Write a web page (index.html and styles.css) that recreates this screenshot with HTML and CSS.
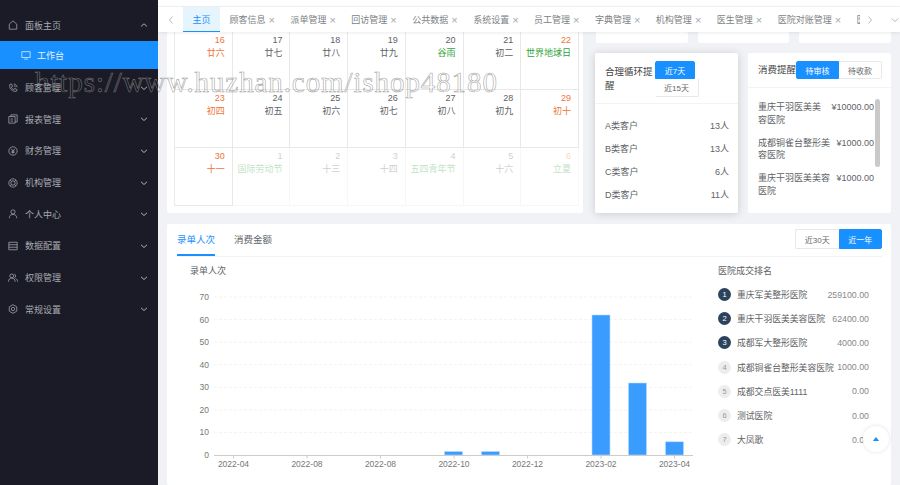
FILE: index.html
```html
<!DOCTYPE html>
<html lang="zh-CN">

<head>
    <meta charset="UTF-8">
    <meta name="viewport" content="width=device-width, initial-scale=1.0">
    <title>工作台</title>
    <link rel="stylesheet" href="styles.css">
</head>

<body>
    <!-- 左侧菜单 -->
    <aside class="side">
        <div class="menu">
            <svg class="ico" viewBox="0 0 12 12"><path d="M1.5 11V5L6 1l4.500 4v6z" /></svg>
            <span>面板主页</span>
            <svg class="arrow" viewBox="0 0 8 8"><path d="M1 5.500 4 2.800l3 2.700" /></svg>
        </div>
        <div class="menu-sub">
            <svg class="ico" viewBox="0 0 12 12"><path d="M1 2h10v7H1zM4 11h4" /></svg>
            <span>工作台</span>
        </div>
        <div class="menu">
            <svg class="ico" viewBox="0 0 12 12"><path d="M2 2l2-1 1.500 3L4 5c.5 1.500 1.500 2.500 3 3l1-1.500 3 1.500-1 2C5 10.500 1.500 7 2 2zM7 1c2 .5 3.500 2 4 4M7 3c1 .3 1.700 1 2 2" /></svg>
            <span>顾客管理</span>
            <svg class="arrow" viewBox="0 0 8 8"><path d="M1 2.800 4 5.500l3-2.700" /></svg>
        </div>
        <div class="menu">
            <svg class="ico" viewBox="0 0 12 12"><path d="M3.500 3V1H11v8.500H8.500M1 3h7.500v8H1zM3 6h3M3 8.500h3" /></svg>
            <span>报表管理</span>
            <svg class="arrow" viewBox="0 0 8 8"><path d="M1 2.800 4 5.500l3-2.700" /></svg>
        </div>
        <div class="menu">
            <svg class="ico" viewBox="0 0 12 12"><circle cx="6" cy="6" r="5" /><path d="M4 3.500l2 2.500 2-2.500M6 6v3M4.200 6.300h3.600M4.200 7.800h3.600" /></svg>
            <span>财务管理</span>
            <svg class="arrow" viewBox="0 0 8 8"><path d="M1 2.800 4 5.500l3-2.700" /></svg>
        </div>
        <div class="menu">
            <svg class="ico" viewBox="0 0 12 12"><circle cx="6" cy="6" r="5" /><circle cx="6" cy="6" r="2.600" /><path d="M2.500 2.500l1.700 1.700M9.500 2.500 7.800 4.200M2.500 9.500l1.700-1.700M9.500 9.500 7.800 7.800" /></svg>
            <span>机构管理</span>
            <svg class="arrow" viewBox="0 0 8 8"><path d="M1 2.800 4 5.500l3-2.700" /></svg>
        </div>
        <div class="menu">
            <svg class="ico" viewBox="0 0 12 12"><circle cx="6" cy="3.500" r="2.500" /><path d="M1.500 11c0-3 2-4.500 4.500-4.500s4.500 1.500 4.500 4.500" /></svg>
            <span>个人中心</span>
            <svg class="arrow" viewBox="0 0 8 8"><path d="M1 2.800 4 5.500l3-2.700" /></svg>
        </div>
        <div class="menu">
            <svg class="ico" viewBox="0 0 12 12"><path d="M1 1.500h10v9H1zM1 4.500h10M1 7.500h10" /></svg>
            <span>数据配置</span>
            <svg class="arrow" viewBox="0 0 8 8"><path d="M1 2.800 4 5.500l3-2.700" /></svg>
        </div>
        <div class="menu">
            <svg class="ico" viewBox="0 0 12 12"><circle cx="4.500" cy="3.500" r="2.300" /><path d="M.5 10.500c0-3 1.800-4.300 4-4.300s4 1.300 4 4.300M7.500 1.300a2.300 2.300 0 0 1 0 4.400M9 6.500c1.500.6 2.500 2 2.500 4" /></svg>
            <span>权限管理</span>
            <svg class="arrow" viewBox="0 0 8 8"><path d="M1 2.800 4 5.500l3-2.700" /></svg>
        </div>
        <div class="menu">
            <svg class="ico" viewBox="0 0 12 12"><path d="M6 .8l4.500 2.600v5.200L6 11.200 1.500 8.600V3.400z" /><circle cx="6" cy="6" r="2" /></svg>
            <span>常规设置</span>
            <svg class="arrow" viewBox="0 0 8 8"><path d="M1 2.800 4 5.500l3-2.700" /></svg>
        </div>
    </aside>

    <main class="main">
        <div class="top"></div>

        <!-- 标签栏 -->
        <nav class="tabs">
            <svg class="tab-btn" viewBox="0 0 8 10"><path d="M5.500 1.500 2.500 5l3 3.500" /></svg>
            <div class="tab-list">
                <div class="tab on">主页</div>
                <div class="tab">顾客信息<i>×</i></div>
                <div class="tab">派单管理<i>×</i></div>
                <div class="tab">回访管理<i>×</i></div>
                <div class="tab">公共数据<i>×</i></div>
                <div class="tab">系统设置<i>×</i></div>
                <div class="tab">员工管理<i>×</i></div>
                <div class="tab">字典管理<i>×</i></div>
                <div class="tab">机构管理<i>×</i></div>
                <div class="tab">医生管理<i>×</i></div>
                <div class="tab">医院对账管理<i>×</i></div>
                <div class="tab">医</div>
            </div>
            <svg class="tab-btn tab-next" viewBox="0 0 8 10"><path d="M2.500 1.500 5.500 5l-3 3.500" /></svg>
            <svg class="tab-down" viewBox="0 0 10 8"><path d="M1.500 2.500 5 5.500l3.500-3" /></svg>
        </nav>

        <div class="page">
            <div class="row-top">
                <!-- 日历 -->
                <section class="card cal">
                    <div class="cal-grid">
                        <div class="day off"><b>16</b><span>廿六</span></div>
                        <div class="day"><b>17</b><span>廿七</span></div>
                        <div class="day"><b>18</b><span>廿八</span></div>
                        <div class="day"><b>19</b><span>廿九</span></div>
                        <div class="day"><b>20</b><span class="term">谷雨</span></div>
                        <div class="day"><b>21</b><span>初二</span></div>
                        <div class="day off"><b>22</b><span class="term">世界地球日</span></div>

                        <div class="day off"><b>23</b><span>初四</span></div>
                        <div class="day"><b>24</b><span>初五</span></div>
                        <div class="day"><b>25</b><span>初六</span></div>
                        <div class="day"><b>26</b><span>初七</span></div>
                        <div class="day"><b>27</b><span>初八</span></div>
                        <div class="day"><b>28</b><span>初九</span></div>
                        <div class="day off"><b>29</b><span>初十</span></div>

                        <div class="day off"><b>30</b><span>十一</span></div>
                        <div class="day next"><b>1</b><span class="term">国际劳动节</span></div>
                        <div class="day next"><b>2</b><span>十三</span></div>
                        <div class="day next"><b>3</b><span>十四</span></div>
                        <div class="day next"><b>4</b><span class="term">五四青年节</span></div>
                        <div class="day next"><b>5</b><span>十六</span></div>
                        <div class="day next off"><b>6</b><span class="term">立夏</span></div>
                    </div>
                </section>

                <div class="right-col">
                    <div class="stubs">
                        <div class="card"></div>
                        <div class="card"></div>
                        <div class="card"></div>
                    </div>
                    <div class="remind-row">
                        <!-- 合理循环提醒 -->
                        <section class="card remind raised">
                            <div class="remind-head">
                                <div class="remind-title">合理循环提醒</div>
                                <div class="stack">
                                    <div class="btn on b7">近7天</div>
                                    <div class="btn b15">近15天</div>
                                </div>
                            </div>
                            <ul class="kinds">
                                <li><span>A类客户</span><span>13人</span></li>
                                <li><span>B类客户</span><span>13人</span></li>
                                <li><span>C类客户</span><span>6人</span></li>
                                <li><span>D类客户</span><span>11人</span></li>
                            </ul>
                        </section>

                        <!-- 消费提醒 -->
                        <section class="card remind">
                            <div class="pay-head">
                                <div class="pay-title">消费提醒</div>
                                <div class="btn on bw">待审核</div>
                                <div class="btn bw">待收款</div>
                            </div>
                            <div class="pay-body">
                                <ul class="pays">
                                    <li><span>重庆干羽医美美容医院</span><em>¥10000.00</em></li>
                                    <li><span>成都铜雀台整形美容医院</span><em>¥1000.00</em></li>
                                    <li><span>重庆干羽医美美容医院</span><em>¥1000.00</em></li>
                                </ul>
                                <div class="bar"></div>
                            </div>
                        </section>
                    </div>
                </div>
            </div>

            <!-- 下方统计 -->
            <section class="card stat">
                <div class="stat-head">
                    <div class="stat-tab on">录单人次</div>
                    <div class="stat-tab">消费金额</div>
                    <div class="range">
                        <div class="btn rw">近30天</div>
                        <div class="btn on rw">近一年</div>
                    </div>
                </div>
                <div class="stat-body">
                    <div class="chart">
                        <div class="chart-title">录单人次</div>
                        <svg class="plot" viewBox="167 285 540 200">
                            <g class="grid">
                                <path d="M214 297H693M214 319.600H693M214 342.200H693M214 364.700H693M214 387.300H693M214 409.900H693M214 432.400H693" />
                            </g>
                            <g class="bars">
                                <rect x="444.500" y="451.500" width="18" height="3.500" />
                                <rect x="481.500" y="451.500" width="18" height="3.500" />
                                <rect x="592" y="315" width="18" height="140" />
                                <rect x="628.500" y="383" width="18" height="72" />
                                <rect x="665.500" y="441.800" width="18" height="13.200" />
                            </g>
                            <path class="axis" d="M214 455.500H693M233.500 455.500v3M307 455.500v3M380.500 455.500v3M454 455.500v3M527.500 455.500v3M601 455.500v3M674.500 455.500v3" />
                            <g class="ylabel">
                                <text x="209" y="300">70</text>
                                <text x="209" y="322.600">60</text>
                                <text x="209" y="345.200">50</text>
                                <text x="209" y="367.700">40</text>
                                <text x="209" y="390.300">30</text>
                                <text x="209" y="412.900">20</text>
                                <text x="209" y="435.400">10</text>
                                <text x="209" y="458">0</text>
                            </g>
                            <g class="xlabel">
                                <text x="233.500" y="467">2022-04</text>
                                <text x="307" y="467">2022-08</text>
                                <text x="380.500" y="467">2022-08</text>
                                <text x="454" y="467">2022-10</text>
                                <text x="527.500" y="467">2022-12</text>
                                <text x="601" y="467">2023-02</text>
                                <text x="674.500" y="467">2023-04</text>
                            </g>
                        </svg>
                    </div>
                    <div class="rank">
                        <div class="rank-title">医院成交排名</div>
                        <ul class="rank-list">
                            <li class="top3"><b>1</b><span>重庆军美整形医院</span><em>259100.00</em></li>
                            <li class="top3"><b>2</b><span>重庆干羽医美美容医院</span><em>62400.00</em></li>
                            <li class="top3"><b>3</b><span>成都军大整形医院</span><em>4000.00</em></li>
                            <li><b>4</b><span>成都铜雀台整形美容医院</span><em>1000.00</em></li>
                            <li><b>5</b><span>成都交点医美1111</span><em>0.00</em></li>
                            <li><b>6</b><span>测试医院</span><em>0.00</em></li>
                            <li><b>7</b><span>大凤歌</span><em>0.00</em></li>
                        </ul>
                    </div>
                </div>
            </section>
        </div>
    </main>

    <!-- 回到顶部 -->
    <div class="totop"><svg viewBox="0 0 10 6"><path d="M5 0l4 5H1z" /></svg></div>

    <!-- 水印 -->
    <div class="mark">https://www.huzhan.com/ishop48180</div>
</body>

</html>
```

FILE: styles.css
```css
* {
    margin: 0;
    padding: 0;
    box-sizing: border-box;
}

body {
    width: 900px;
    height: 485px;
    display: flex;
    overflow: hidden;
    background-color: #f0f2f6;
    font-family: "Liberation Sans", "Noto Sans CJK SC", sans-serif;
    font-size: 9px;
    color: #606266;
}

ul {
    list-style: none;
}

em,
i {
    font-style: normal;
}

/* 左侧菜单 */

.side {
    flex: none;
    width: 158px;
    padding-top: 9.500px;
    background-color: #1a1b26;
    color: #a9abb2;
}

.menu {
    height: 31.700px;
    display: flex;
    align-items: center;
    padding: 0 9px 0 8px;
}

.menu span {
    flex: 1;
    margin-left: 7px;
}

.ico {
    flex: none;
    width: 10px;
    height: 10px;
    fill: none;
    stroke: currentColor;
    stroke-width: .9;
}

.arrow {
    flex: none;
    width: 8px;
    height: 8px;
    margin-right: 1px;
    fill: none;
    stroke: currentColor;
    stroke-width: 1;
}

.menu-sub {
    height: 28px;
    margin-bottom: 2.500px;
    display: flex;
    align-items: center;
    padding-left: 21px;
    background-color: #1890ff;
    color: #e8f4ff;
}

.menu-sub span {
    margin-left: 6px;
}

/* 主体 */

.main {
    flex: 1;
    min-width: 0;
    display: flex;
    flex-direction: column;
}

.top {
    flex: none;
    height: 7px;
    background-color: #fff;
    border-bottom: 1px solid #f1f1f3;
}

.tabs {
    position: relative;
    z-index: 1;
    flex: none;
    height: 25px;
    display: flex;
    align-items: center;
    background-color: #fff;
    box-shadow: 0 1px 3px rgba(0, 0, 0, .08);
}

.tab-btn {
    flex: none;
    width: 8px;
    height: 10px;
    margin: 0 8.500px;
    fill: none;
    stroke: #aaa;
    stroke-width: .8;
}

.tab-next {
    margin: 0 8px 0 6px;
}

.tab-list {
    flex: none;
    width: 677px;
    height: 100%;
    display: flex;
    overflow: hidden;
}

.tab {
    flex: none;
    height: 100%;
    display: flex;
    align-items: center;
    padding: 0 6.400px 0 9.500px;
    color: #7d7f84;
    white-space: nowrap;
}

.tab i {
    width: 6px;
    margin-left: 3px;
    text-align: center;
    font-size: 11px;
    color: #a8a8a8;
}

.tab.on {
    padding: 0 9.500px;
    background-color: #e6f4fd;
    border-bottom: 1px solid #1890ff;
    color: #1890ff;
}

.tab-down {
    flex: none;
    width: 10px;
    height: 8px;
    margin-left: 8px;
    fill: none;
    stroke: #aaa;
    stroke-width: .8;
}

.page {
    flex: 1;
    min-height: 0;
    padding: 0 9px;
}

.card {
    background-color: #fff;
    border-radius: 2px;
}

.row-top {
    display: flex;
    gap: 13px;
    height: 181px;
}

/* 日历 */

.cal {
    flex: none;
    width: 416px;
    padding: 0 4px 7px 7px;
}

.cal-grid {
    height: 174px;
    display: grid;
    grid-template-columns: repeat(7, 1fr);
    grid-template-rows: repeat(3, 58px);
    border-left: 1px solid #eaeaea;
}

.day {
    display: flex;
    flex-direction: column;
    align-items: flex-end;
    padding: 2px 7px 0 0;
    border-right: 1px solid #e8e8e8;
    border-bottom: 1px solid #e8e8e8;
    line-height: 13px;
    color: #606266;
}

.day b {
    font-weight: normal;
}

.day.off {
    color: #f0733a;
}

.day .term {
    color: #31a33a;
}

.day.next {
    opacity: .3;
}

/* 右侧提醒 */

.right-col {
    flex: 1;
    display: flex;
    flex-direction: column;
    gap: 10px;
}

.stubs {
    flex: none;
    height: 11px;
    display: flex;
    gap: 10px;
}

.stubs .card {
    flex: 1;
}

.remind-row {
    flex: 1;
    display: flex;
    gap: 10px;
    margin-left: -1px;
}

.remind {
    flex: 1;
    display: flex;
    flex-direction: column;
}

.raised {
    box-shadow: 0 1px 8px rgba(0, 0, 0, .16);
}

.btn {
    display: flex;
    align-items: center;
    justify-content: center;
    height: 18px;
    border: 1px solid #e6e8ec;
    font-size: 8px;
    color: #666;
    background-color: #fff;
}

.btn.on {
    border-color: #1890ff;
    background-color: #1890ff;
    color: #fff;
}

.remind-head {
    height: 51px;
    flex: none;
    display: flex;
    padding: 8px 0 0 10px;
    border-bottom: 1px solid #f2f3f5;
}

.remind-title {
    width: 50px;
    margin-top: 4px;
    line-height: 14px;
    font-size: 9.500px;
    color: #444;
}

.b7 {
    width: 40px;
    border-radius: 2px 2px 0 0;
}

.b15 {
    width: 44px;
    border-top: none;
    border-left: none;
    border-radius: 0 0 2px 2px;
}

.kinds {
    padding: 10px 9px 0 10px;
}

.kinds li {
    height: 23px;
    display: flex;
    align-items: center;
    justify-content: space-between;
}

.pay-head {
    height: 35px;
    flex: none;
    display: flex;
    align-items: flex-start;
    padding: 8px 9px 0 10px;
    border-bottom: 1px solid #f2f3f5;
}

.pay-title {
    width: 38px;
    line-height: 18px;
    font-size: 9.500px;
    color: #444;
}

.bw {
    width: 43px;
}

.btn.on.bw {
    border-radius: 2px 0 0 2px;
}

.btn.bw:not(.on) {
    border-left: none;
    border-radius: 0 2px 2px 0;
}

.pay-body {
    display: flex;
    padding: 11px 11px 0 10px;
    gap: 1px;
}

.pays {
    width: 116px;
}

.pays li {
    height: 35.500px;
    display: flex;
    line-height: 12.700px;
    padding-top: 2px;
}

.pays span {
    flex: 1;
    min-width: 0;
    margin-right: 5px;
}

.pays em {
    flex: none;
    white-space: nowrap;
}

.bar {
    flex: none;
    width: 5px;
    height: 68px;
    border-radius: 3px;
    background-color: #c9c9c9;
}

/* 统计 */

.stat {
    height: 261px;
    margin-top: 11px;
    padding: 0 9px 0 10px;
}

.stat-head {
    height: 33px;
    display: flex;
    align-items: flex-start;
    gap: 19px;
    border-bottom: 1px solid #f2f3f5;
}

.stat-tab {
    width: 38px;
    height: 32px;
    padding-top: 8px;
    line-height: 15px;
    font-size: 9.500px;
    white-space: nowrap;
}

.stat-tab.on {
    border-bottom: 2px solid #1890ff;
    color: #1890ff;
}

.range {
    display: flex;
    margin: 5px 0 0 auto;
}

.rw {
    width: 43.500px;
    height: 20px;
}

.rw:first-child {
    border-right: none;
    border-radius: 2px 0 0 2px;
}

.rw:last-child {
    border-radius: 0 2px 2px 0;
}

.stat-body {
    display: flex;
    margin-left: -10px;
}

.chart {
    flex: none;
    width: 551px;
}

.chart-title {
    height: 28px;
    padding: 8px 0 0 23px;
    line-height: 13px;
}

.plot {
    display: block;
    width: 540px;
    height: 200px;
}

.grid path {
    fill: none;
    stroke: #f3f3f3;
    stroke-width: 1;
    stroke-dasharray: 3 2;
}

.bars rect {
    fill: #3a9cff;
    stroke: #b5daff;
    stroke-width: .6;
}

.axis {
    fill: none;
    stroke: #ccc;
    stroke-width: 1;
}

.plot text {
    font-family: "Liberation Sans", sans-serif;
    font-size: 8.500px;
    fill: #777;
}

.ylabel text {
    text-anchor: end;
}

.xlabel text {
    text-anchor: middle;
}

.rank {
    flex: none;
    width: 151px;
}

.rank-title {
    height: 25.500px;
    padding-top: 8px;
    line-height: 13px;
}

.rank-list li {
    height: 24.200px;
    display: flex;
    align-items: center;
}

.rank-list b {
    flex: none;
    width: 13px;
    height: 13px;
    margin-right: 6px;
    border-radius: 50%;
    background-color: #ededed;
    font-size: 7.500px;
    font-weight: normal;
    line-height: 13px;
    text-align: center;
    color: #999;
}

.rank-list .top3 b {
    background-color: #2c435d;
    color: #fff;
}

.rank-list span {
    flex: 1;
    font-size: 8.800px;
    white-space: nowrap;
}

.rank-list em {
    flex: none;
    font-size: 8.800px;
    color: #888;
}

/* 浮在内容上面的 */

.totop {
    position: absolute;
    left: 863px;
    top: 426px;
    width: 26px;
    height: 26px;
    display: flex;
    align-items: center;
    justify-content: center;
    border-radius: 50%;
    background-color: #fff;
    box-shadow: 0 0 4px rgba(0, 0, 0, .12);
}

.totop svg {
    width: 8px;
    height: 5px;
    fill: #1890ff;
}

.mark {
    position: absolute;
    left: 35px;
    top: 64px;
    font-family: "Liberation Serif", serif;
    font-size: 29px;
    line-height: 36px;
    letter-spacing: .9px;
    white-space: nowrap;
    color: transparent;
    -webkit-text-stroke: .6px rgba(140, 140, 140, .8);
}
```
